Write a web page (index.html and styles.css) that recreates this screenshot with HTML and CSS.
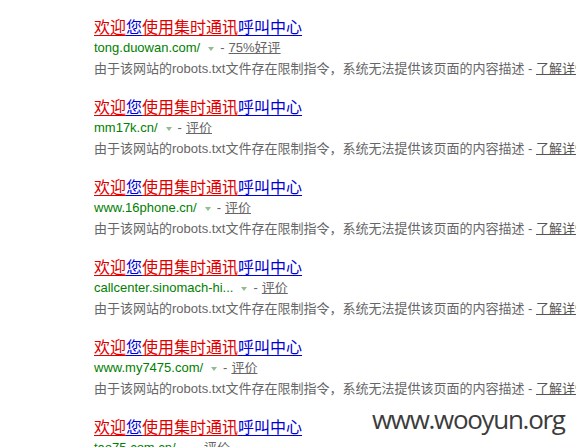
FILE: index.html
```html
<!DOCTYPE html>
<html lang="zh">
<head>
<meta charset="utf-8">
<link rel="stylesheet" href="styles.css">
</head>
<body>
<div class="results">
  <div class="item">
    <div class="title"><span class="r">欢迎</span><span class="b">您</span><span class="r">使用集时通讯</span><span class="b">呼叫中心</span></div>
    <div class="url"><span class="host">tong.duowan.com/</span><span class="arrow"></span><span class="dash">-</span><span class="rate">75%好评</span></div>
    <div class="desc">由于该网站的robots.txt文件存在限制指令，系统无法提供该页面的内容描述 - <span class="more">了解详情</span></div>
  </div>
  <div class="item">
    <div class="title"><span class="r">欢迎</span><span class="b">您</span><span class="r">使用集时通讯</span><span class="b">呼叫中心</span></div>
    <div class="url"><span class="host">mm17k.cn/</span><span class="arrow"></span><span class="dash">-</span><span class="rate">评价</span></div>
    <div class="desc">由于该网站的robots.txt文件存在限制指令，系统无法提供该页面的内容描述 - <span class="more">了解详情</span></div>
  </div>
  <div class="item">
    <div class="title"><span class="r">欢迎</span><span class="b">您</span><span class="r">使用集时通讯</span><span class="b">呼叫中心</span></div>
    <div class="url"><span class="host">www.16phone.cn/</span><span class="arrow"></span><span class="dash">-</span><span class="rate">评价</span></div>
    <div class="desc">由于该网站的robots.txt文件存在限制指令，系统无法提供该页面的内容描述 - <span class="more">了解详情</span></div>
  </div>
  <div class="item">
    <div class="title"><span class="r">欢迎</span><span class="b">您</span><span class="r">使用集时通讯</span><span class="b">呼叫中心</span></div>
    <div class="url"><span class="host">callcenter.sinomach-hi...</span><span class="arrow"></span><span class="dash">-</span><span class="rate">评价</span></div>
    <div class="desc">由于该网站的robots.txt文件存在限制指令，系统无法提供该页面的内容描述 - <span class="more">了解详情</span></div>
  </div>
  <div class="item">
    <div class="title"><span class="r">欢迎</span><span class="b">您</span><span class="r">使用集时通讯</span><span class="b">呼叫中心</span></div>
    <div class="url"><span class="host">www.my7475.com/</span><span class="arrow"></span><span class="dash">-</span><span class="rate">评价</span></div>
    <div class="desc">由于该网站的robots.txt文件存在限制指令，系统无法提供该页面的内容描述 - <span class="more">了解详情</span></div>
  </div>
  <div class="item">
    <div class="title"><span class="r">欢迎</span><span class="b">您</span><span class="r">使用集时通讯</span><span class="b">呼叫中心</span></div>
    <div class="url"><span class="host">tao75.com.cn/</span><span class="arrow"></span><span class="dash">-</span><span class="rate">评价</span></div>
  </div>
</div>
<div class="watermark">www.wooyun.org</div>
</body>
</html>
```

FILE: styles.css
```css
html, body {
  margin: 0;
  padding: 0;
  background: #fff;
  width: 576px;
  height: 447px;
  overflow: hidden;
  position: relative;
}
.results {
  padding: 15px 0 0 94px;
  font-family: "Liberation Sans", "Noto Sans CJK SC", sans-serif;
}
.item {
  margin-bottom: 17px;
}
.title {
  font-family: "Noto Sans CJK SC", sans-serif;
  font-size: 16px;
  line-height: 22px;
  height: 22px;
  white-space: nowrap;
}
.title span {
  text-decoration: underline;
  text-underline-offset: 2px;
}
.title .r { color: #e00000; }
.title .b { color: #0000d8; }
.url {
  font-size: 13px;
  line-height: 22px;
  height: 22px;
  white-space: nowrap;
  display: flex;
  align-items: center;
}
.host { color: #008000; }
.arrow {
  width: 0;
  height: 0;
  border-left: 3.5px solid transparent;
  border-right: 3.5px solid transparent;
  border-top: 4px solid #8fbf8f;
  margin: 2px 6px 0 8px;
}
.dash { color: #666; margin-right: 4px; }
.rate {
  color: #666;
  text-decoration: underline;
}
.desc {
  font-size: 13px;
  line-height: 19px;
  height: 19px;
  color: #666;
  white-space: nowrap;
  overflow: hidden;
  width: 482px;
}
.more {
  color: #555;
  text-decoration: underline;
}
.watermark {
  position: absolute;
  right: 0;
  bottom: 0;
  width: 194px;
  height: 52px;
  padding: 0 10px 0 12px;
  background: #fff;
  color: #3c3c3c;
  font-family: "Open Sans", sans-serif;
  font-size: 26px;
  letter-spacing: -1.3px;
  line-height: 48px;
  white-space: nowrap;
}
```
